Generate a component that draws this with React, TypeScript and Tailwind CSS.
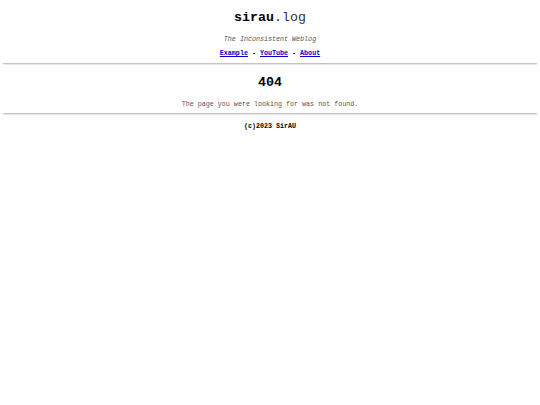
export default function App() {
  return (
    <div className="min-h-[405px] bg-white px-[3px] text-center text-black" style={{ fontFamily: '"Liberation Mono", "Courier New", monospace' }}>
      <div className="pt-[10px] text-[13.3px] leading-[16px]">
        <span className="font-bold">sirau</span><span className="text-[#333]">.log</span>
      </div>
      <div className="mt-[9px] text-[6.7px] leading-[8px] italic text-[#555]">The Inconsistent Weblog</div>
      <div className="mt-[6px] text-[6.7px] leading-[8px] font-bold">
        <a href="#" className="text-[#0000cc] underline">Example</a> - <a href="#" className="text-[#0000cc] underline">YouTube</a> - <a href="#" className="text-[#0000cc] underline">About</a>
      </div>
      <div className="mt-[6px] h-[2px] border-t border-t-[#c4c4c4] border-b border-b-[#e8e8e8]" />
      <div className="mt-[10px] text-[13.3px] leading-[16px] font-bold">404</div>
      <div className="mt-[9px] text-[6.7px] leading-[8px] text-[#555]">The page you were looking for was not found.</div>
      <div className="mt-[5px] h-[2px] border-t border-t-[#c4c4c4] border-b border-b-[#e8e8e8]" />
      <div className="mt-[7px] text-[6.7px] leading-[8px] font-bold">(c)2023 SirAU</div>
    </div>
  );
}
